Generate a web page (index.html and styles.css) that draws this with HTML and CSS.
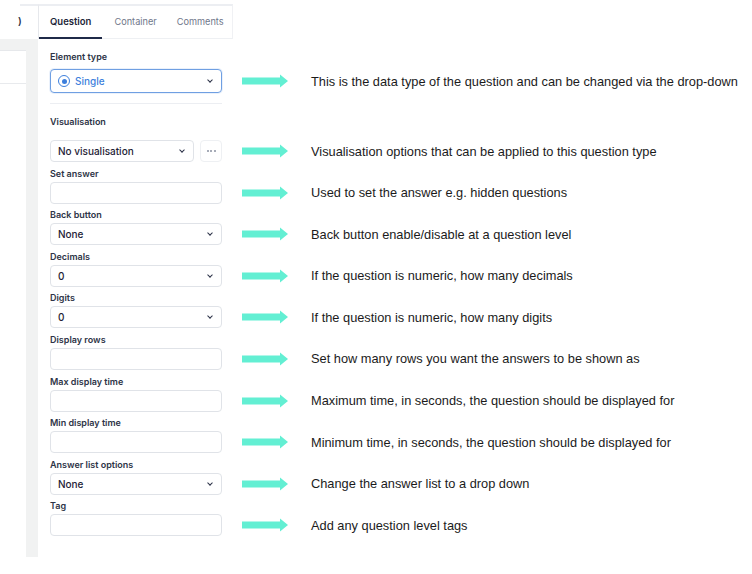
FILE: index.html
```html
<!DOCTYPE html>
<html lang="en">

<head>
    <meta charset="UTF-8">
    <meta name="viewport" content="width=device-width, initial-scale=1.0">
    <title>Question properties</title>
    <link rel="stylesheet" href="styles.css">
</head>

<body>
    <div class="topbar">
        <div class="topbar-side">)</div>
        <div class="tabs">
            <span class="tab active">Question</span>
            <span class="tab">Container</span>
            <span class="tab">Comments</span>
        </div>
    </div>

    <div class="main">
        <div class="strip">
            <div class="card">
                <div class="card-head"></div>
            </div>
        </div>

        <div class="form">
            <!-- 元素类型 -->
            <div class="field field-first">
                <div class="field-label">Element type</div>
                <div class="field-line">
                    <div class="control select select-active">
                        <span class="radio"></span>
                        <span class="value">Single</span>
                        <span class="chevron"></span>
                    </div>
                    <div class="note">
                        <svg class="arrow" width="46" height="14" viewBox="0 0 46 14"><path d="M0 3.5H38V0.5L46 7L38 13.5V10.5H0Z" fill="#63efd3"/></svg>
                        <span>This is the data type of the question and can be changed via the drop-down</span>
                    </div>
                </div>
            </div>

            <div class="divider"></div>

            <div class="field field-vis">
                <div class="field-label">Visualisation</div>
                <div class="field-line">
                    <div class="control-group">
                        <div class="control select select-short">
                            <span class="value">No visualisation</span>
                            <span class="chevron"></span>
                        </div>
                        <div class="dots-btn"><span></span><span></span><span></span></div>
                    </div>
                    <div class="note">
                        <svg class="arrow" width="46" height="14" viewBox="0 0 46 14"><path d="M0 3.5H38V0.5L46 7L38 13.5V10.5H0Z" fill="#63efd3"/></svg>
                        <span>Visualisation options that can be applied to this question type</span>
                    </div>
                </div>
            </div>

            <div class="field">
                <div class="field-label">Set answer</div>
                <div class="field-line">
                    <div class="control"></div>
                    <div class="note">
                        <svg class="arrow" width="46" height="14" viewBox="0 0 46 14"><path d="M0 3.5H38V0.5L46 7L38 13.5V10.5H0Z" fill="#63efd3"/></svg>
                        <span>Used to set the answer e.g. hidden questions</span>
                    </div>
                </div>
            </div>

            <div class="field">
                <div class="field-label">Back button</div>
                <div class="field-line">
                    <div class="control select">
                        <span class="value">None</span>
                        <span class="chevron"></span>
                    </div>
                    <div class="note">
                        <svg class="arrow" width="46" height="14" viewBox="0 0 46 14"><path d="M0 3.5H38V0.5L46 7L38 13.5V10.5H0Z" fill="#63efd3"/></svg>
                        <span>Back button enable/disable at a question level</span>
                    </div>
                </div>
            </div>

            <div class="field">
                <div class="field-label">Decimals</div>
                <div class="field-line">
                    <div class="control select">
                        <span class="value">0</span>
                        <span class="chevron"></span>
                    </div>
                    <div class="note">
                        <svg class="arrow" width="46" height="14" viewBox="0 0 46 14"><path d="M0 3.5H38V0.5L46 7L38 13.5V10.5H0Z" fill="#63efd3"/></svg>
                        <span>If the question is numeric, how many decimals</span>
                    </div>
                </div>
            </div>

            <div class="field">
                <div class="field-label">Digits</div>
                <div class="field-line">
                    <div class="control select">
                        <span class="value">0</span>
                        <span class="chevron"></span>
                    </div>
                    <div class="note">
                        <svg class="arrow" width="46" height="14" viewBox="0 0 46 14"><path d="M0 3.5H38V0.5L46 7L38 13.5V10.5H0Z" fill="#63efd3"/></svg>
                        <span>If the question is numeric, how many digits</span>
                    </div>
                </div>
            </div>

            <div class="field">
                <div class="field-label">Display rows</div>
                <div class="field-line">
                    <div class="control"></div>
                    <div class="note">
                        <svg class="arrow" width="46" height="14" viewBox="0 0 46 14"><path d="M0 3.5H38V0.5L46 7L38 13.5V10.5H0Z" fill="#63efd3"/></svg>
                        <span>Set how many rows you want the answers to be shown as</span>
                    </div>
                </div>
            </div>

            <div class="field">
                <div class="field-label">Max display time</div>
                <div class="field-line">
                    <div class="control"></div>
                    <div class="note">
                        <svg class="arrow" width="46" height="14" viewBox="0 0 46 14"><path d="M0 3.5H38V0.5L46 7L38 13.5V10.5H0Z" fill="#63efd3"/></svg>
                        <span>Maximum time, in seconds, the question should be displayed for</span>
                    </div>
                </div>
            </div>

            <div class="field">
                <div class="field-label">Min display time</div>
                <div class="field-line">
                    <div class="control"></div>
                    <div class="note">
                        <svg class="arrow" width="46" height="14" viewBox="0 0 46 14"><path d="M0 3.5H38V0.5L46 7L38 13.5V10.5H0Z" fill="#63efd3"/></svg>
                        <span>Minimum time, in seconds, the question should be displayed for</span>
                    </div>
                </div>
            </div>

            <div class="field">
                <div class="field-label">Answer list options</div>
                <div class="field-line">
                    <div class="control select">
                        <span class="value">None</span>
                        <span class="chevron"></span>
                    </div>
                    <div class="note">
                        <svg class="arrow" width="46" height="14" viewBox="0 0 46 14"><path d="M0 3.5H38V0.5L46 7L38 13.5V10.5H0Z" fill="#63efd3"/></svg>
                        <span>Change the answer list to a drop down</span>
                    </div>
                </div>
            </div>

            <div class="field field-last">
                <div class="field-label">Tag</div>
                <div class="field-line">
                    <div class="control"></div>
                    <div class="note">
                        <svg class="arrow" width="46" height="14" viewBox="0 0 46 14"><path d="M0 3.5H38V0.5L46 7L38 13.5V10.5H0Z" fill="#63efd3"/></svg>
                        <span>Add any question level tags</span>
                    </div>
                </div>
            </div>
        </div>
    </div>
</body>

</html>
```

FILE: styles.css
```css
* {
    margin: 0;
    padding: 0;
    box-sizing: border-box;
}

html,
body {
    background-color: #fff;
    font-family: Inter, "Noto Sans", sans-serif;
    color: #1e2436;
}

/* 顶部标签栏 */

.topbar {
    display: flex;
    margin-top: 4px;
    height: 35px;
}

.topbar-side {
    width: 18px;
    margin-left: 20px;
    border-top: 2px solid #eceef2;
    font-size: 10px;
    font-weight: 600;
    line-height: 31px;
    color: #2a3042;
    text-indent: -2px;
}

.tabs {
    display: flex;
    width: 195px;
    border-top: 2px solid #eceef2;
    border-left: 1px solid #e6e8ec;
    border-right: 1px solid #f0f1f4;
    border-bottom: 1px solid #eef0f3;
}

.tab {
    padding: 0 8px 0 12px;
    font-size: 9.2px;
    line-height: 31px;
    color: #70778a;
}

.tab.active {
    padding: 0 11px;
    font-size: 9.5px;
    color: #1d2538;
    font-weight: 600;
    border-bottom: 2px solid #1f2a48;
    margin-bottom: -1px;
}

/* 主体 */

.main {
    display: flex;
}

.strip {
    width: 38px;
    flex-shrink: 0;
    background-color: #f1f2f2;
    padding: 11px 12px 0 0;
}

.card {
    height: 100%;
    background-color: #fff;
    border-top: 1px solid #e6e8eb;
}

.card-head {
    height: 33px;
    border-bottom: 1px solid #e8eaed;
}

.form {
    flex: 1;
    padding: 12px 0 21px 12px;
}

.field {
    margin-bottom: 5.6px;
}

.field-last {
    margin-bottom: 0;
}

.field-label {
    font-size: 9px;
    font-weight: 600;
    line-height: 12px;
    color: #2d3446;
    margin-bottom: 2px;
}

.field-first .field-label {
    margin-bottom: 6px;
}

.field-vis {
    margin-top: 12px;
}

.field-vis .field-label {
    margin-bottom: 12px;
}

.divider {
    width: 172px;
    margin-top: 10px;
    border-top: 1px solid #eceef2;
}

.field-line {
    display: flex;
    align-items: center;
}

.control {
    width: 172px;
    height: 22px;
    flex-shrink: 0;
    border: 1px solid #e0e3e8;
    border-radius: 4px;
    background-color: #fff;
}

.select {
    display: flex;
    align-items: center;
    padding: 0 9px 0 7px;
}

.select .value {
    flex: 1;
    font-size: 10px;
    font-weight: 500;
    color: #1e2235;
}

.chevron {
    width: 4px;
    height: 4px;
    border-right: 1.5px solid #2a3046;
    border-bottom: 1.5px solid #2a3046;
    transform: rotate(45deg);
    margin-top: -2px;
}

.select-active {
    height: 24px;
    border-color: #6f9fe2;
    box-shadow: 0 0 0 1px rgba(111, 159, 226, 0.15);
}

.select-active .value {
    color: #3d7fdc;
    margin-left: 5px;
}

.radio {
    width: 12px;
    height: 12px;
    border: 1.5px solid #3d7fdc;
    border-radius: 50%;
    display: flex;
    align-items: center;
    justify-content: center;
}

.radio::after {
    content: "";
    width: 5px;
    height: 5px;
    border-radius: 50%;
    background-color: #3d7fdc;
}

.control-group {
    display: flex;
    gap: 6px;
    width: 172px;
    flex-shrink: 0;
}

.select-short {
    width: 144px;
}

.dots-btn {
    width: 22px;
    height: 22px;
    border: 1px solid #eef0f3;
    border-radius: 4px;
    display: flex;
    align-items: center;
    justify-content: center;
    gap: 1.5px;
}

.dots-btn span {
    width: 2px;
    height: 2px;
    border-radius: 50%;
    background-color: #8a90a0;
}

/* 右侧说明 */

.note {
    display: flex;
    align-items: center;
    margin-left: 20px;
    white-space: nowrap;
    font-family: "Liberation Sans", Arial, sans-serif;
    font-size: 12.8px;
    color: #1b1b1b;
}

.note .arrow {
    display: block;
    margin-right: 23px;
    flex-shrink: 0;
}
```
